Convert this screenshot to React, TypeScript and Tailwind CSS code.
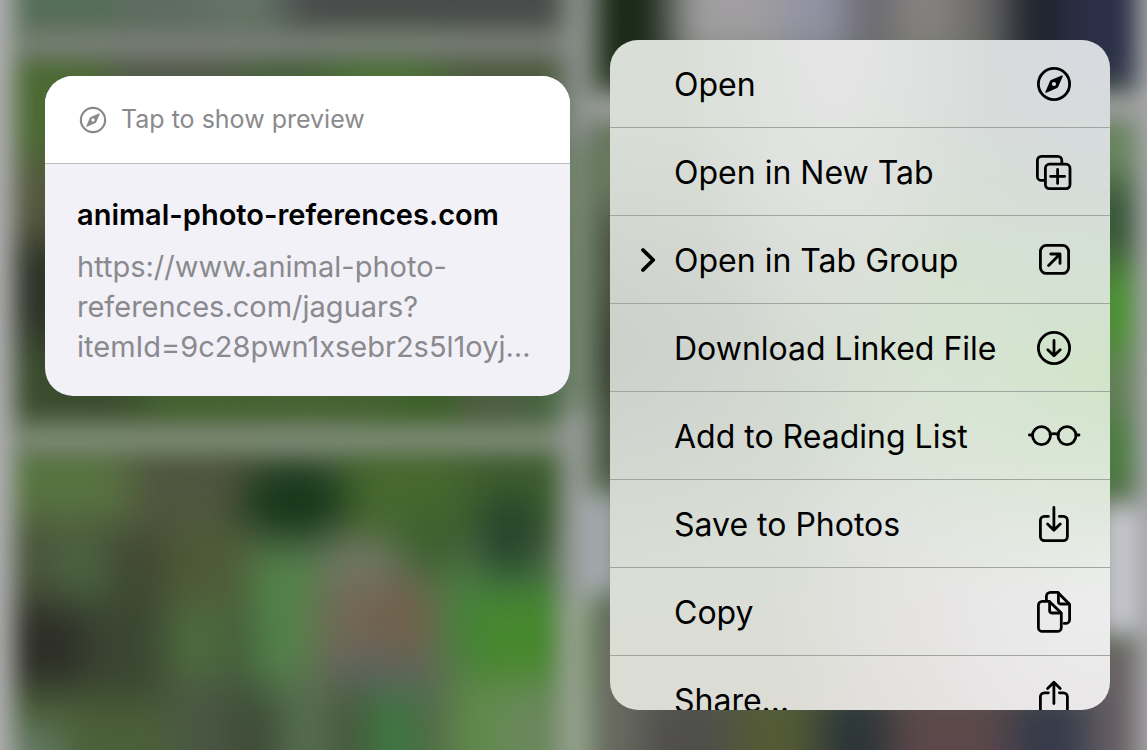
import type { ReactNode } from "react"
import { clsx } from "clsx"

type Patch = [x: number, y: number, w: number, h: number, color: string]

// Colour patches of the page that lies out of focus behind the menu
const patches: Patch[] = [
  // top left tile
  [-40, -60, 170, 95, "#566f5a"],
  [120, -60, 100, 95, "#5f6e63"],
  [210, -60, 90, 95, "#66756a"],
  [285, -60, 290, 95, "#494b4c"],
  // middle left tile
  [-20, 45, 150, 125, "#4c6a34"],
  [-20, 160, 140, 90, "#55583f"],
  [-20, 240, 140, 110, "#2f3428"],
  [-20, 340, 180, 90, "#3a4c2e"],
  [110, 45, 140, 75, "#53594a"],
  [240, 45, 100, 75, "#46613b"],
  [330, 45, 130, 70, "#4a7234"],
  [440, 45, 150, 75, "#4d5a3e"],
  [500, 110, 90, 160, "#4f6650"],
  [500, 240, 90, 190, "#45653f"],
  [140, 370, 300, 65, "#44622f"],
  [400, 370, 80, 65, "#3a6026"],
  [460, 375, 60, 60, "#505c44"],
  // bottom left tile
  [-20, 440, 170, 90, "#587440"],
  [-20, 520, 140, 100, "#4a553c"],
  [-20, 600, 110, 100, "#33342b"],
  [-20, 690, 210, 120, "#4a6038"],
  [0, 730, 60, 60, "#6a8070"],
  [130, 440, 130, 100, "#50553f"],
  [95, 530, 90, 90, "#414733"],
  [165, 520, 90, 90, "#4e5a38"],
  [65, 540, 40, 60, "#4a6b42"],
  [85, 600, 90, 100, "#3a4531"],
  [165, 605, 75, 80, "#4e6c3e"],
  [170, 680, 80, 120, "#4a5744"],
  [230, 610, 50, 190, "#3c4a36"],
  [340, 440, 150, 100, "#47692f"],
  [390, 510, 70, 60, "#3a602c"],
  [460, 440, 130, 100, "#3f5f2f"],
  [250, 550, 75, 140, "#528349"],
  [280, 670, 50, 130, "#577050"],
  [440, 570, 140, 100, "#46803f"],
  [475, 600, 100, 80, "#46882c"],
  [445, 680, 65, 120, "#5f8a4a"],
  [500, 680, 80, 120, "#6a885c"],
  [325, 540, 75, 80, "#75786a"],
  [315, 580, 125, 100, "#716855"],
  [330, 655, 100, 40, "#5d6260"],
  [330, 690, 45, 110, "#46553a"],
  [370, 690, 45, 110, "#3c7c42"],
  [415, 690, 30, 110, "#52604a"],
  // top right tile
  [595, -60, 75, 150, "#182716"],
  [670, -60, 110, 120, "#a09ea0"],
  [780, -60, 70, 120, "#9292a3"],
  [850, -60, 40, 120, "#66656c"],
  [890, -60, 70, 120, "#85827f"],
  [960, -60, 55, 120, "#696868"],
  [1010, -60, 55, 150, "#1b2029"],
  [1060, -60, 120, 150, "#2b3048"],
  // middle right tile
  [590, 120, 60, 90, "#6d7a5e"],
  [590, 210, 60, 110, "#4d4f40"],
  [590, 310, 60, 110, "#3b3b33"],
  [590, 400, 60, 80, "#465040"],
  [1080, 120, 80, 60, "#6b8a60"],
  [1080, 180, 80, 80, "#385738"],
  [1080, 265, 80, 90, "#4b9232"],
  [1080, 350, 80, 70, "#638058"],
  [1080, 420, 80, 70, "#4a7d40"],
  // bottom right tile
  [590, 610, 60, 190, "#6c6c64"],
  [640, 690, 100, 110, "#4f4e4c"],
  [730, 690, 90, 110, "#535a34"],
  [820, 690, 70, 110, "#2b3438"],
  [890, 690, 130, 110, "#5c484a"],
  [1010, 690, 90, 110, "#363a4a"],
  [1090, 640, 80, 160, "#6a6266"],
]

// Rounder spots painted over the patches
const spots: Patch[] = [
  [240, 460, 110, 80, "#16361a"],
  [480, 490, 60, 90, "#22412a"],
  [370, 580, 65, 80, "#70604c"],
  [30, 610, 40, 80, "#2a2a25"],
]

// Light gaps between the tiles
const gaps: Patch[] = [
  [-40, -40, 54, 830, "#b0b0b2"],
  [20, 32, 560, 24, "#7f837f"],
  [20, 426, 560, 26, "#83907e"],
  [562, -40, 32, 180, "#8a8f8b"],
  [560, 140, 34, 270, "#768672"],
  [560, 410, 34, 210, "#959a96"],
  [558, 600, 32, 190, "#96a28f"],
  [590, 96, 600, 24, "#a9abaa"],
  [580, 494, 40, 100, "#a2a9ad"],
  [1100, 504, 90, 130, "#c9c9d0"],
  [1136, -40, 60, 830, "#a6a6a9"],
]

function Backdrop() {
  return (
    <svg
      aria-hidden="true"
      className="absolute inset-0 h-full w-full"
      viewBox="0 0 1147 750"
      preserveAspectRatio="xMidYMid slice"
    >
      <defs>
        <filter id="soft" x="-10%" y="-10%" width="120%" height="120%" colorInterpolationFilters="sRGB">
          <feGaussianBlur stdDeviation="20" />
        </filter>
        <filter id="gap" x="-10%" y="-10%" width="120%" height="120%" colorInterpolationFilters="sRGB">
          <feGaussianBlur stdDeviation="12" />
        </filter>
      </defs>
      <rect width="1147" height="750" fill="#5c6a54" />
      <g filter="url(#soft)">
        {patches.map(([x, y, w, h, color], i) => (
          <rect key={i} x={x} y={y} width={w} height={h} fill={color} />
        ))}
        {spots.map(([x, y, w, h, color], i) => (
          <ellipse
            key={i}
            cx={x + w / 2}
            cy={y + h / 2}
            rx={w / 2}
            ry={h / 2}
            fill={color}
          />
        ))}
      </g>
      <g filter="url(#gap)">
        {gaps.map(([x, y, w, h, color], i) => (
          <rect key={i} x={x} y={y} width={w} height={h} fill={color} />
        ))}
      </g>
    </svg>
  )
}

function Icon({ children }: { children: ReactNode }) {
  return (
    <svg
      aria-hidden="true"
      className="h-11 w-14 shrink-0 overflow-visible"
      viewBox="0 0 56 44"
      fill="none"
      stroke="currentColor"
      strokeWidth="2.8"
      strokeLinecap="round"
      strokeLinejoin="round"
    >
      {children}
    </svg>
  )
}

const compass = (
  <>
    <circle cx="28" cy="22" r="15.6" />
    <path
      d="M35.7 13.5 25 18.1Q24.3 18.4 24 19.1L19.3 29.9Q19.1 31.1 20.3 30.7L31.1 26Q31.8 25.7 32.1 25L36.8 14.2Q36.9 13.1 35.7 13.5Z M28 19.9a2.1 2.1 0 1 0 0 4.2a2.1 2.1 0 1 0 0-4.2Z"
      fill="currentColor"
      fillRule="evenodd"
      stroke="none"
    />
  </>
)

const newTab = (
  <>
    <rect x="19.4" y="14.2" width="24.6" height="24.4" rx="4" />
    <path d="M18.6 30.4H15.4a4 4 0 0 1-4-4V10.4a4 4 0 0 1 4-4h16.4a4 4 0 0 1 4 4v3" />
    <path d="M31.6 19.4v14M24.6 26.4h14" />
  </>
)

const tabGroup = (
  <>
    <rect x="14.4" y="7.4" width="28.2" height="28" rx="6" />
    <path d="M22.6 27.4 33.8 16.2M24.8 16h9.2v9.4" />
  </>
)

const download = (
  <>
    <circle cx="28" cy="22" r="15.6" />
    <path d="M28 14.4v15.2M21.8 23.8l6.2 6 6.2-6" />
  </>
)

const glasses = (
  <>
    <circle cx="15.5" cy="21.6" r="9" />
    <circle cx="41" cy="21.6" r="9" />
    <path d="M24 20.4q4.2-1.6 8.4 0M3.4 21h3M50 21h3" />
  </>
)

const save = (
  <>
    <path d="M22.4 14.4h-4a4 4 0 0 0-4 4v16.2a4 4 0 0 0 4 4h19a4 4 0 0 0 4-4V18.4a4 4 0 0 0-4-4h-4" />
    <path d="M27.9 5.4v22.4M21.6 22l6.3 6.2 6.3-6.2" />
  </>
)

const copy = (
  <>
    <path d="M20.4 10V6.4a4 4 0 0 1 4-4h7.4L43.6 14.2v15.2a4 4 0 0 1-4 4h-1.4" />
    <path d="M32.4 3v8.6a2.4 2.4 0 0 0 2.4 2.4h8" />
    <path d="M16.4 11.4h7L35.3 23v14.4a4 4 0 0 1-4 4H16.4a4 4 0 0 1-4-4V15.4a4 4 0 0 1 4-4Z" />
    <path d="M23.6 12v8.6a2.4 2.4 0 0 0 2.4 2.4h8.4" />
  </>
)

const share = (
  <>
    <path d="M22.4 14.8h-4a4 4 0 0 0-4 4V35a4 4 0 0 0 4 4h19a4 4 0 0 0 4-4V18.8a4 4 0 0 0-4-4h-4" />
    <path d="M27.9 25.6V4.4M21.6 10.4l6.3-6.2 6.3 6.2" />
  </>
)

const actions = [
  { label: "Open", icon: compass },
  { label: "Open in New Tab", icon: newTab },
  { label: "Open in Tab Group", icon: tabGroup, submenu: true },
  { label: "Download Linked File", icon: download },
  { label: "Add to Reading List", icon: glasses },
  { label: "Save to Photos", icon: save },
  { label: "Copy", icon: copy },
  { label: "Share…", icon: share },
]

function PreviewCard() {
  return (
    <section className="mt-9 min-w-0 flex-[525] overflow-hidden rounded-[28px] bg-[#f2f1f7]">
      <button
        type="button"
        className="flex h-22 w-full items-center gap-3.5 border-b border-[#bdbdc1] bg-white pl-[34px] text-left text-[25px] text-[#8a8a8c]"
      >
        <svg
          aria-hidden="true"
          className="size-7 shrink-0"
          viewBox="10 4 36 36"
          fill="none"
          stroke="currentColor"
          strokeWidth="2.8"
        >
          {compass}
        </svg>
        Tap to show preview
      </button>
      <a
        href="https://www.animal-photo-references.com/jaguars"
        className="block px-8 pt-[31px] pb-[29px] leading-10"
      >
        <h1 className="text-[29px] font-semibold text-black">
          animal-photo-references.com
        </h1>
        <p className="mt-3 text-[29px] text-[#8a8a8e]">
          https://www.animal-photo-
          <br />
          references.com/jaguars?
          <br />
          itemId=9c28pwn1xsebr2s5l1oyj…
        </p>
      </a>
    </section>
  )
}

function ContextMenu() {
  return (
    <nav
      aria-label="Link actions"
      className="h-full min-w-0 flex-[500] overflow-hidden rounded-[28px] bg-[#d9dfd7] bg-[radial-gradient(ellipse_at_45%_-5%,#e6e6e7,transparent_40%),radial-gradient(ellipse_at_100%_-5%,#d6d9e0,transparent_36%),radial-gradient(ellipse_at_105%_48%,#cfe4c8,transparent_52%),radial-gradient(ellipse_at_-5%_46%,#cccfca,transparent_46%),radial-gradient(ellipse_at_100%_80%,#efeef0,transparent_48%),radial-gradient(ellipse_at_90%_110%,#e1dcdc,transparent_50%),linear-gradient(to_top,#dcdcd4,transparent_30%)]"
    >
      {actions.map(({ label, icon, submenu }, i) => (
        <button
          key={label}
          type="button"
          className={clsx(
            "flex h-22 w-full items-center pr-7 text-left text-[32px] text-black",
            i < actions.length - 1 && "border-b border-[#a0a59f]"
          )}
        >
          <span className="flex w-16 shrink-0 justify-center pl-3">
            {submenu && (
              <svg
                aria-hidden="true"
                className="h-7 w-4"
                viewBox="0 0 16 28"
                fill="none"
                stroke="currentColor"
                strokeWidth="3.8"
                strokeLinecap="round"
                strokeLinejoin="round"
              >
                <path d="M3 4 13.2 14 3 24" />
              </svg>
            )}
          </span>
          <span className="flex-1 pt-0.5 whitespace-nowrap">{label}</span>
          <Icon>{icon}</Icon>
        </button>
      ))}
    </nav>
  )
}

export default function App() {
  return (
    <main className="relative h-screen overflow-hidden font-['Inter',sans-serif]">
      <Backdrop />
      <div className="relative flex h-full items-start gap-10 py-10 pr-[37px] pl-[45px]">
        <PreviewCard />
        <ContextMenu />
      </div>
    </main>
  )
}
